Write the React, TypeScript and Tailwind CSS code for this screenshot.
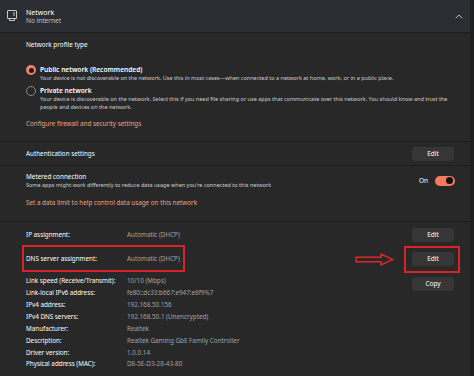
import React from "react";

const font = { fontFamily: '"Noto Sans", "Liberation Sans", sans-serif' };

const EditButton = ({ label = "Edit" }: { label?: string }) => (
  <div className="w-[42px] h-[14px] rounded-[3px] bg-[#363636] flex items-center justify-center text-[6.5px] text-white">
    {label}
  </div>
);

const Radio = ({ checked }: { checked?: boolean }) =>
  checked ? (
    <div className="w-[10px] h-[10px] rounded-full bg-[#f0826a] flex items-center justify-center">
      <div className="w-[5px] h-[5px] rounded-full bg-[#1a1a1a]" />
    </div>
  ) : (
    <div className="w-[10px] h-[10px] rounded-full border border-[#8a8a8a]" />
  );

const Separator = () => <div className="h-[1px] bg-[#1c1c1c]" />;

const properties = [
  ["Link speed (Receive/Transmit):", "10/10 (Mbps)"],
  ["Link-local IPv6 address:", "fe80::dc33:b667:e947:e8f9%7"],
  ["IPv4 address:", "192.168.50.156"],
  ["IPv4 DNS servers:", "192.168.50.1 (Unencrypted)"],
  ["Manufacturer:", "Realtek"],
  ["Description:", "Realtek Gaming GbE Family Controller"],
  ["Driver version:", "1.0.0.14"],
  ["Physical address (MAC):", "D8-5E-D3-28-43-80"],
];

export default function App() {
  return (
    <div className="w-[474px] h-[376px] bg-[#1f1f1f] overflow-hidden" style={font}>
      <div className="w-[470px] h-[376px] bg-[#282828] flex flex-col">
        {/* header */}
        <div className="h-[32px] bg-[#2c2d33] flex items-center pl-[7px] pr-[7px]">
          <svg width="10" height="12" viewBox="0 0 10 12" fill="none" stroke="#d8d8d8" strokeWidth="0.9">
            <rect x="0.5" y="0.5" width="9" height="8" rx="0.5" />
            <path d="M2.5 8.5v2h5v-2" />
            <path d="M6 3h2M6 5h2" />
          </svg>
          <div className="ml-[9px] flex flex-col">
            <span className="text-[7px] leading-[9px] text-white">Network</span>
            <span className="text-[6.5px] leading-[8px] text-[#c4c4c4]">No internet</span>
          </div>
          <div className="flex-1" />
          <svg width="8" height="5" viewBox="0 0 8 5" fill="none" stroke="#c8c8c8" strokeWidth="0.9">
            <path d="M0.7 4.3L4 1l3.3 3.3" />
          </svg>
        </div>
        <Separator />

        {/* network profile */}
        <div className="pl-[26px] pr-[20px] pt-[7px] pb-[12px] flex flex-col">
          <span className="text-[6.4px] leading-[10px] text-white">Network profile type</span>
          <div className="mt-[16px] flex">
            <div className="mt-[-1px]"><Radio checked /></div>
            <div className="ml-[4px] flex flex-col">
              <span className="text-[6.6px] leading-[8px] font-semibold text-white">Public network (Recommended)</span>
              <span className="text-[5.5px] leading-[8px] text-[#cfcfcf]">
                Your device is not discoverable on the network. Use this in most cases—when connected to a network at home, work, or in a public place.
              </span>
            </div>
          </div>
          <div className="mt-[5px] flex">
            <div className="mt-[-1px]"><Radio /></div>
            <div className="ml-[4px] flex flex-col">
              <span className="text-[6.6px] leading-[8px] font-semibold text-white">Private network</span>
              <span className="text-[5.5px] leading-[8px] text-[#cfcfcf]">
                Your device is discoverable on the network. Select this if you need file sharing or use apps that communicate over this network. You should know and trust the people and devices on the network.
              </span>
            </div>
          </div>
          <span className="mt-[8px] text-[6.3px] leading-[10px] text-[#e8a287]">Configure firewall and security settings</span>
        </div>
        <Separator />

        {/* authentication */}
        <div className="h-[23px] pl-[26px] pr-[16px] flex items-center justify-between">
          <span className="text-[6.3px] text-white">Authentication settings</span>
          <EditButton />
        </div>
        <Separator />

        {/* metered */}
        <div className="pl-[26px] pr-[15px] pt-[6px] pb-[13px] flex flex-col">
          <div className="flex items-center">
            <div className="flex flex-col flex-1">
              <span className="text-[6.4px] leading-[9px] text-white">Metered connection</span>
              <span className="text-[5.5px] leading-[8px] text-[#cfcfcf]">
                Some apps might work differently to reduce data usage when you're connected to this network
              </span>
            </div>
            <span className="text-[6.5px] text-white mr-[7px]">On</span>
            <div className="w-[20px] h-[10px] rounded-full bg-[#f47b5d] flex items-center justify-end pr-[2px]">
              <div className="w-[7px] h-[7px] rounded-full bg-[#111111]" />
            </div>
          </div>
          <span className="mt-[9px] text-[6.3px] leading-[10px] text-[#e8a287]">Set a data limit to help control data usage on this network</span>
        </div>
        <Separator />

        {/* IP settings */}
        <div className="pl-[26px] pr-[16px] pt-[1px] flex flex-col">
          <div className="h-[24px] flex items-center">
            <span className="w-[101px] text-[6.3px] text-white">IP assignment:</span>
            <span className="text-[6.3px] text-[#a3a3a3]">Automatic (DHCP)</span>
            <div className="flex-1" />
            <EditButton />
          </div>
          <div className="h-[24px] flex items-center relative">
            <div className="absolute left-[-4px] top-[-2px] w-[163px] h-[27px] border-2 border-[#d9222a]" />
            <span className="w-[101px] text-[6.3px] text-white">DNS server assignment:</span>
            <span className="text-[6.3px] text-[#a3a3a3]">Automatic (DHCP)</span>
            <div className="flex-1" />
            <svg width="39" height="13" viewBox="0 0 39 13" fill="none" stroke="#e0262d" strokeWidth="1.4" className="mr-[18px]">
              <path d="M1 4.2h25V1l12 5.5L26 12V8.8H1z" strokeLinejoin="miter" />
            </svg>
            <div className="relative">
              <div className="absolute left-[-8px] top-[-6px] w-[56px] h-[27px] border-2 border-[#d9222a]" />
              <EditButton />
            </div>
          </div>
          <div className="mt-[4px] flex">
            <div className="flex flex-col flex-1">
              {properties.map(([k, v]) => (
                <div key={k} className="h-[11.9px] flex items-center">
                  <span className="w-[101px] text-[6.3px] text-white">{k}</span>
                  <span className="text-[6.3px] text-[#a3a3a3]">{v}</span>
                </div>
              ))}
            </div>
            <div className="mt-[2px]">
              <EditButton label="Copy" />
            </div>
          </div>
        </div>
      </div>
    </div>
  );
}
